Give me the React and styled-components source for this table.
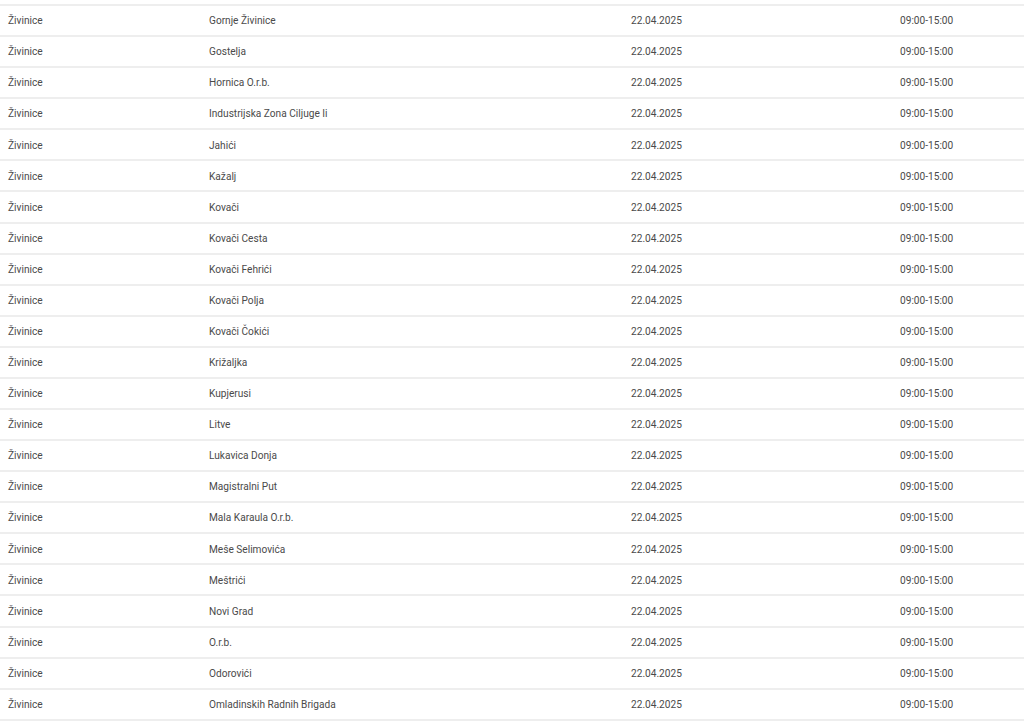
import React from 'react'
import styled, { createGlobalStyle } from 'styled-components'

const places = [
    'Gornje Živinice',
    'Gostelja',
    'Hornica O.r.b.',
    'Industrijska Zona Ciljuge Ii',
    'Jahići',
    'Kažalj',
    'Kovači',
    'Kovači Cesta',
    'Kovači Fehrići',
    'Kovači Polja',
    'Kovači Čokići',
    'Križaljka',
    'Kupjerusi',
    'Litve',
    'Lukavica Donja',
    'Magistralni Put',
    'Mala Karaula O.r.b.',
    'Meše Selimovića',
    'Meštrići',
    'Novi Grad',
    'O.r.b.',
    'Odorovići',
    'Omladinskih Radnih Brigada',
]

const GlobalStyle = createGlobalStyle`
    html, body {
        margin: 0;
        padding: 0;
        background: #fff;
        overflow: hidden;
    }
    body {
        font-family: Roboto, "Liberation Sans", sans-serif;
    }
`

function App() {
    return (
        <>
        <GlobalStyle />
        <Page>
            <Table>
                <colgroup>
                    <col style={{ width: 201 }} />
                    <col style={{ width: 422 }} />
                    <col style={{ width: 269 }} />
                    <col />
                </colgroup>
                <tbody>
                    {places.map((place) => (
                        <Row key={place}>
                            <Cell>Živinice</Cell>
                            <Cell>{place}</Cell>
                            <Cell>22.04.2025</Cell>
                            <Cell>09:00-15:00</Cell>
                        </Row>
                    ))}
                </tbody>
            </Table>
        </Page>
        </>
    )
}

const Page = styled.div`
    padding-top: 4px;
    width: 1024px;
`

const Table = styled.table`
    width: 100%;
    border-collapse: collapse;
    table-layout: fixed;
`

const Row = styled.tr`
    border-top: 2px solid #eeeeee;
    &:last-child {
        border-bottom: 2px solid #eeeeee;
    }
`

const Cell = styled.td`
    padding: 8.2px 8px 7.8px;
    font-size: 10.15px;
    line-height: 13.09px;
    color: #4a4a4a;
    text-align: left;
    white-space: nowrap;
`

export default App
